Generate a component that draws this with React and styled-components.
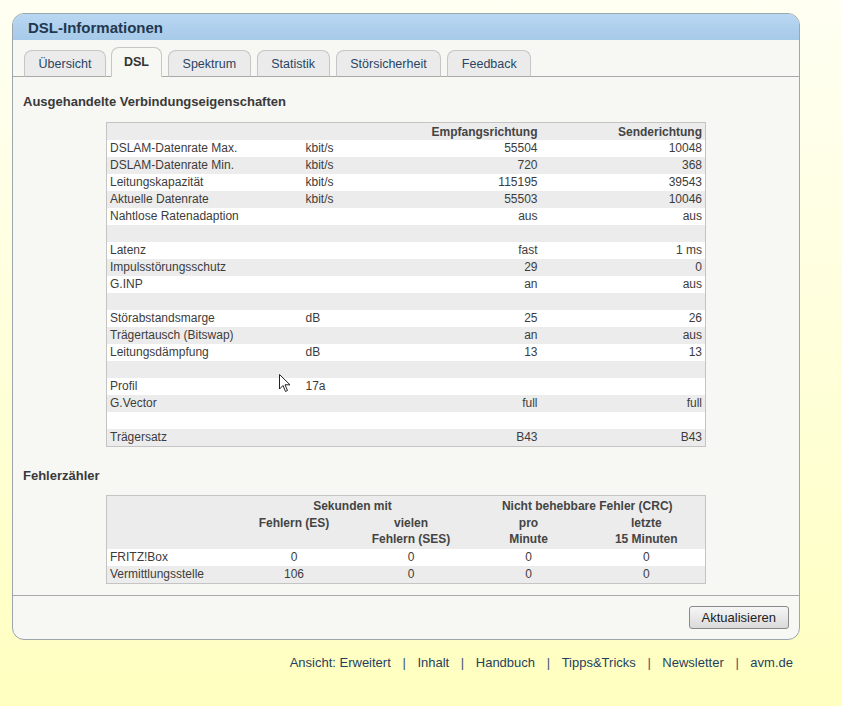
import React from "react";
import styled, { createGlobalStyle } from "styled-components";

const GlobalStyle = createGlobalStyle`
  html, body {
    margin: 0;
    padding: 0;
  }
  body {
    font-family: "Liberation Sans", Arial, sans-serif;
    background: linear-gradient(#fffff3 0%, #ffffd8 55%, #ffffc0 100%);
    min-height: 706px;
  }
`;

const Page = styled.div`
  width: 842px;
  min-height: 706px;
  padding: 13px 0 0 12px;
  box-sizing: border-box;
`;

const Panel = styled.div`
  width: 788px;
  box-sizing: border-box;
  border: 1px solid #9ba6ad;
  border-radius: 12px;
  background: #f7f7f3;
  overflow: hidden;
`;

const Header = styled.div`
  height: 26px;
  display: flex;
  align-items: center;
  padding-left: 15px;
  background: linear-gradient(#b8d7f2, #a6cae9);
  color: #23384f;
  font-size: 15px;
  font-weight: bold;
`;

const TabBar = styled.div`
  display: flex;
  align-items: flex-end;
  gap: 6px;
  height: 36px;
  padding-left: 11px;
  border-bottom: 1px solid #a9a9a9;
`;

const Tab = styled.div`
  height: ${(p) => (p.$active ? "30px" : "27px")};
  margin-left: ${(p) => (p.$active ? "-1px" : "0")};
  margin-bottom: -1px;
  padding: 0 ${(p) => (p.$active ? "12px" : "13.6px")};
  display: flex;
  align-items: center;
  box-sizing: border-box;
  border: 1px solid #c6c6c6;
  border-bottom: ${(p) => (p.$active ? "1px solid #f7f7f3" : "1px solid #a9a9a9")};
  border-radius: 8px 8px 0 0;
  background: ${(p) => (p.$active ? "#f7f7f3" : "#ebebeb")};
  color: ${(p) => (p.$active ? "#333" : "#2a4563")};
  font-size: 12.5px;
  font-weight: ${(p) => (p.$active ? "bold" : "normal")};
`;

const Content = styled.div`
  padding: 0 10px;
`;

const Heading = styled.h2`
  margin: ${(p) => p.$top}px 0 ${(p) => p.$bottom}px;
  font-size: 13px;
  line-height: 16px;
  font-weight: bold;
  color: #3a3a3a;
`;

const Table = styled.table`
  width: 599px;
  margin: 0 auto;
  border-collapse: collapse;
  border: 1px solid #c4c4c4;
  font-size: 12px;
  color: #3c3c3c;
  table-layout: fixed;
`;

const Row = styled.tr`
  background: ${(p) => (p.$grey ? "#ececec" : "#ffffff")};
`;

const Cell = styled.td`
  height: 17px;
  padding: 0 3px;
  line-height: 17px;
  text-align: ${(p) => p.$align || "left"};
  vertical-align: ${(p) => p.$valign || "middle"};
  white-space: nowrap;
`;

const HeadCell = styled.th`
  height: 17px;
  padding: 0 3px;
  line-height: 16px;
  font-weight: bold;
  color: #444;
  text-align: ${(p) => p.$align || "left"};
  vertical-align: ${(p) => p.$valign || "middle"};
`;

const Divider = styled.div`
  margin-top: 11px;
  border-top: 1px solid #a9a9a9;
`;

const ButtonBar = styled.div`
  display: flex;
  justify-content: flex-end;
  padding: 10px 10px 10px;
`;

const Button = styled.button`
  height: 23px;
  padding: 0 12px;
  border: 1px solid #8a8a8a;
  border-radius: 3px;
  background: linear-gradient(#f6f6f6, #dadada);
  font-family: "Liberation Sans", Arial, sans-serif;
  font-size: 13px;
  color: #222;
`;

const Footer = styled.div`
  display: flex;
  justify-content: flex-end;
  gap: 11.6px;
  width: 788px;
  padding-right: 7px;
  box-sizing: border-box;
  margin-top: 15px;
  font-size: 13px;
  color: #1f3f5e;
`;

const Sep = styled.span`
  color: #3a5570;
`;

const tabs = ["Übersicht", "DSL", "Spektrum", "Statistik", "Störsicherheit", "Feedback"];

const props = [
  ["DSLAM-Datenrate Max.", "kbit/s", "55504", "10048"],
  ["DSLAM-Datenrate Min.", "kbit/s", "720", "368"],
  ["Leitungskapazität", "kbit/s", "115195", "39543"],
  ["Aktuelle Datenrate", "kbit/s", "55503", "10046"],
  ["Nahtlose Ratenadaption", "", "aus", "aus"],
  ["", "", "", ""],
  ["Latenz", "", "fast", "1 ms"],
  ["Impulsstörungsschutz", "", "29", "0"],
  ["G.INP", "", "an", "aus"],
  ["", "", "", ""],
  ["Störabstandsmarge", "dB", "25", "26"],
  ["Trägertausch (Bitswap)", "", "an", "aus"],
  ["Leitungsdämpfung", "dB", "13", "13"],
  ["", "", "", ""],
  ["Profil", "17a", "", ""],
  ["G.Vector", "", "full", "full"],
  ["", "", "", ""],
  ["Trägersatz", "", "B43", "B43"],
];

const errors = [
  ["FRITZ!Box", "0", "0", "0", "0"],
  ["Vermittlungsstelle", "106", "0", "0", "0"],
];

const links = ["Ansicht: Erweitert", "Inhalt", "Handbuch", "Tipps&Tricks", "Newsletter", "avm.de"];

const Cursor = () => (
  <svg width="12" height="19" viewBox="0 0 12 19" style={{ position: "absolute", left: -24, top: -4 }}>
    <path d="M0.5 0.5 L0.5 15 L4 11.5 L6.5 17.5 L8.5 16.5 L6 10.8 L11 10.8 Z" fill="#fff" stroke="#222" strokeWidth="1" />
  </svg>
);

const App = () => {
  return (
    <Page>
      <GlobalStyle />
      <Panel>
        <Header>DSL-Informationen</Header>
        <TabBar>
          {tabs.map((t) => (
            <Tab key={t} $active={t === "DSL"}>
              {t}
            </Tab>
          ))}
        </TabBar>
        <Content>
          <Heading $top={17} $bottom={12}>
            Ausgehandelte Verbindungseigenschaften
          </Heading>
          <Table>
            <colgroup>
              <col style={{ width: 196 }} />
              <col style={{ width: 100 }} />
              <col style={{ width: 138 }} />
              <col style={{ width: 165 }} />
            </colgroup>
            <thead>
              <Row $grey>
                <HeadCell />
                <HeadCell />
                <HeadCell $align="right">Empfangsrichtung</HeadCell>
                <HeadCell $align="right">Senderichtung</HeadCell>
              </Row>
            </thead>
            <tbody>
              {props.map((r, i) => (
                <Row key={i} $grey={i % 2 === 1}>
                  <Cell>{r[0]}</Cell>
                  <Cell style={r[0] === "Profil" ? { position: "relative" } : undefined}>
                    {r[0] === "Profil" && <Cursor />}
                    {r[1]}
                  </Cell>
                  <Cell $align="right">{r[2]}</Cell>
                  <Cell $align="right">{r[3]}</Cell>
                </Row>
              ))}
            </tbody>
          </Table>

          <Heading $top={21} $bottom={11}>
            Fehlerzähler
          </Heading>
          <Table>
            <colgroup>
              <col style={{ width: 129 }} />
              <col style={{ width: 117 }} />
              <col style={{ width: 117 }} />
              <col style={{ width: 118 }} />
              <col style={{ width: 118 }} />
            </colgroup>
            <thead>
              <Row $grey>
                <HeadCell style={{ height: 19 }} />
                <HeadCell colSpan={2} $align="center">
                  Sekunden mit
                </HeadCell>
                <HeadCell colSpan={2} $align="center">
                  Nicht behebbare Fehler (CRC)
                </HeadCell>
              </Row>
              <Row $grey>
                <HeadCell style={{ height: 34 }} />
                <HeadCell $align="center" $valign="top">
                  Fehlern (ES)
                </HeadCell>
                <HeadCell $align="center" $valign="top">
                  vielen
                  <br />
                  Fehlern (SES)
                </HeadCell>
                <HeadCell $align="center" $valign="top">
                  pro
                  <br />
                  Minute
                </HeadCell>
                <HeadCell $align="center" $valign="top">
                  letzte
                  <br />
                  15 Minuten
                </HeadCell>
              </Row>
            </thead>
            <tbody>
              {errors.map((r, i) => (
                <Row key={r[0]} $grey={i === 1}>
                  <Cell>{r[0]}</Cell>
                  {r.slice(1).map((v, j) => (
                    <Cell key={j} $align="center">
                      {v}
                    </Cell>
                  ))}
                </Row>
              ))}
            </tbody>
          </Table>
        </Content>
        <Divider />
        <ButtonBar>
          <Button>Aktualisieren</Button>
        </ButtonBar>
      </Panel>
      <Footer>
        {links.map((l, i) => (
          <React.Fragment key={l}>
            {i > 0 && <Sep>|</Sep>}
            <span>{l}</span>
          </React.Fragment>
        ))}
      </Footer>
    </Page>
  );
};

export default App;
